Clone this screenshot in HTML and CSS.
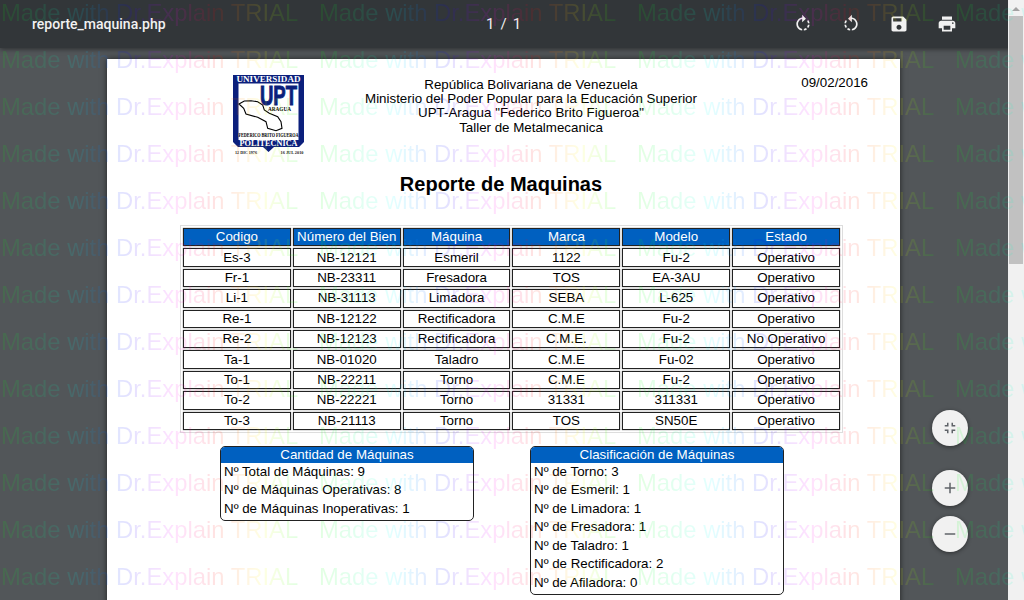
FILE: index.html
```html
<!DOCTYPE html>
<html lang="en">
  <head>
    <meta charset="UTF-8" />
    <title>reporte_maquina.php</title>
    <link rel="stylesheet" href="styles.css">
  </head>
  <body>
    <div class="viewer">
      <header class="toolbar">
        <div class="file-name">reporte_maquina.php</div>
        <div class="page-count"><span>1</span><span>/</span><span>1</span></div>
        <div class="tools">
          <svg viewBox="0 0 24 24"><path d="M15.55 5.55L11 1v3.07C7.06 4.56 4 7.92 4 12s3.05 7.44 7 7.93v-2.02c-2.84-.48-5-2.94-5-5.91s2.16-5.43 5-5.91V10l4.55-4.45zM19.93 11c-.17-1.39-.72-2.73-1.62-3.89l-1.42 1.42c.54.75.88 1.6 1.02 2.47h2.02zM13 17.9v2.02c1.39-.17 2.74-.71 3.9-1.61l-1.44-1.44c-.75.54-1.59.89-2.46 1.03zm3.89-2.42l1.42 1.41c.9-1.16 1.45-2.5 1.62-3.89h-2.02c-.14.87-.48 1.72-1.02 2.48z"/></svg>
          <svg viewBox="0 0 24 24"><path d="M7.11 8.53L5.7 7.11C4.8 8.27 4.24 9.61 4.07 11h2.02c.14-.87.49-1.72 1.02-2.47zM6.09 13H4.07c.17 1.39.72 2.73 1.62 3.89l1.41-1.42c-.52-.75-.87-1.59-1.01-2.47zm1.01 5.32c1.16.9 2.51 1.44 3.9 1.61V17.9c-.87-.15-1.71-.49-2.46-1.03L7.1 18.32zM13 4.07V1L8.45 5.55 13 10V6.09c2.84.48 5 2.94 5 5.91s-2.16 5.43-5 5.91v2.02c3.95-.49 7-3.85 7-7.93s-3.05-7.44-7-7.93z"/></svg>
          <svg viewBox="0 0 24 24"><path d="M17 3H5c-1.11 0-2 .9-2 2v14c0 1.1.89 2 2 2h14c1.1 0 2-.9 2-2V7l-4-4zm-5 16c-1.66 0-3-1.34-3-3s1.34-3 3-3 3 1.34 3 3-1.34 3-3 3zm3-10H5V5h10v4z"/></svg>
          <svg viewBox="0 0 24 24"><path d="M19 8H5c-1.66 0-3 1.34-3 3v6h4v4h12v-4h4v-6c0-1.66-1.34-3-3-3zm-3 11H8v-5h8v5zm3-7c-.55 0-1-.45-1-1s.45-1 1-1 1 .45 1 1-.45 1-1 1zm-1-9H6v4h12V3z"/></svg>
        </div>
      </header>

      <div class="content">
        <main class="stage">
          <div class="page">
            <div class="doc-head">
              <svg class="logo" viewBox="0 0 71 80">
                <path class="navy" d="M0 0H71V67L66 72H41L35.5 77 30 72H5L0 67Z"/>
                <path class="paper" d="M5.5 8.5H65.5V65H5.5Z"/>
                <text class="logo-top" x="35.5" y="6.8" textLength="64" lengthAdjust="spacingAndGlyphs">UNIVERSIDAD</text>
                <text class="logo-upt" x="45.5" y="30" textLength="37" lengthAdjust="spacingAndGlyphs">UPT</text>
                <text class="logo-small" x="46.5" y="36" textLength="23" lengthAdjust="spacingAndGlyphs">ARAGUA</text>
                <path class="map" d="M6 29 11.3 26 18 25.7 24.7 26.7 29.7 30 31.3 35 36.3 38.3 44.7 41.7 48 46.7 49 53.3 43 55.7 34.7 53.3 33 46.7 24.7 42.3 13 39 10.7 33.3Z"/>
                <text class="logo-small" x="35.5" y="62" textLength="60" lengthAdjust="spacingAndGlyphs">FEDERICO BRITO FIGUEROA</text>
                <text class="logo-top" x="35.5" y="71" textLength="58" lengthAdjust="spacingAndGlyphs">POLITECNICA</text>
                <text class="logo-date" x="13" y="78.5" textLength="22" lengthAdjust="spacingAndGlyphs">12 DIC 1976</text>
                <text class="logo-date" x="59" y="78.5" textLength="23" lengthAdjust="spacingAndGlyphs">16 JUL 2010</text>
              </svg>
              <div class="doc-title">
                <div>República Bolivariana de Venezuela</div>
                <div>Ministerio del Poder Popular para la Educación Superior</div>
                <div>UPT-Aragua "Federico Brito Figueroa"</div>
                <div>Taller de Metalmecanica</div>
              </div>
              <div class="doc-date">09/02/2016</div>
            </div>

            <h1>Reporte de Maquinas</h1>

            <table class="report">
              <thead>
                <tr>
                  <th>Codigo</th>
                  <th>Número del Bien</th>
                  <th>Máquina</th>
                  <th>Marca</th>
                  <th>Modelo</th>
                  <th>Estado</th>
                </tr>
              </thead>
              <tbody>
                <tr><td>Es-3</td><td>NB-12121</td><td>Esmeril</td><td>1122</td><td>Fu-2</td><td>Operativo</td></tr>
                <tr><td>Fr-1</td><td>NB-23311</td><td>Fresadora</td><td>TOS</td><td>EA-3AU</td><td>Operativo</td></tr>
                <tr><td>Li-1</td><td>NB-31113</td><td>Limadora</td><td>SEBA</td><td>L-625</td><td>Operativo</td></tr>
                <tr><td>Re-1</td><td>NB-12122</td><td>Rectificadora</td><td>C.M.E</td><td>Fu-2</td><td>Operativo</td></tr>
                <tr><td>Re-2</td><td>NB-12123</td><td>Rectificadora</td><td>C.M.E.</td><td>Fu-2</td><td>No Operativo</td></tr>
                <tr><td>Ta-1</td><td>NB-01020</td><td>Taladro</td><td>C.M.E</td><td>Fu-02</td><td>Operativo</td></tr>
                <tr><td>To-1</td><td>NB-22211</td><td>Torno</td><td>C.M.E</td><td>Fu-2</td><td>Operativo</td></tr>
                <tr><td>To-2</td><td>NB-22221</td><td>Torno</td><td>31331</td><td>311331</td><td>Operativo</td></tr>
                <tr><td>To-3</td><td>NB-21113</td><td>Torno</td><td>TOS</td><td>SN50E</td><td>Operativo</td></tr>
              </tbody>
            </table>

            <div class="summary">
              <section class="box">
                <h2>Cantidad de Máquinas</h2>
                <p>Nº Total de Máquinas: 9</p>
                <p>Nº de Máquinas Operativas: 8</p>
                <p>Nº de Máquinas Inoperativas: 1</p>
              </section>
              <section class="box">
                <h2>Clasificación de Máquinas</h2>
                <p>Nº de Torno: 3</p>
                <p>Nº de Esmeril: 1</p>
                <p>Nº de Limadora: 1</p>
                <p>Nº de Fresadora: 1</p>
                <p>Nº de Taladro: 1</p>
                <p>Nº de Rectificadora: 2</p>
                <p>Nº de Afiladora: 0</p>
              </section>
            </div>
          </div>
        </main>
        <div class="scrollbar">
          <div class="arrow"></div>
          <div class="thumb"></div>
        </div>
      </div>

      <div class="fab fab-fit"><svg viewBox="0 0 24 24"><path d="M5 16h3v3h2v-5H5v2zm3-8H5v2h5V5H8v3zm6 11h2v-3h3v-2h-5v5zm2-11V5h-2v5h5V8h-3z"/></svg></div>
      <div class="fab fab-plus"><svg viewBox="0 0 24 24"><path d="M19 13h-6v6h-2v-6H5v-2h6V5h2v6h6v2z"/></svg></div>
      <div class="fab fab-minus"><svg viewBox="0 0 24 24"><path d="M19 13H5v-2h14v2z"/></svg></div>

      <div class="watermark" id="watermark"></div>
    </div>

    <script>
      const watermark = document.getElementById('watermark');
      for (let i = 0; i < 52; i++) {
        const mark = document.createElement('span');
        mark.textContent = 'Made with Dr.Explain TRIAL';
        watermark.appendChild(mark);
      }
    </script>
  </body>
</html>
```

FILE: styles.css
```css
* {
  margin: 0;
  padding: 0;
  box-sizing: border-box;
}
html,
body {
  height: 100%;
  overflow: hidden;
}
body {
  font-family: "Liberation Sans", Arial, sans-serif;
  font-size: 13.33px;
  color: #000;
}
.viewer {
  position: relative;
  display: flex;
  flex-direction: column;
  width: 1024px;
  height: 600px;
  overflow: hidden;
  background: #f1f1f1;
}

/* top bar */
.toolbar {
  position: relative;
  z-index: 2;
  display: grid;
  grid-template-columns: 454px 100px 1fr;
  align-items: center;
  flex: none;
  height: 48px;
  padding-left: 32px;
  background: #323639;
  color: #f1f1f1;
  box-shadow: 0 1px 5px rgba(0, 0, 0, 0.5);
}
.file-name {
  font-family: Roboto, sans-serif;
  font-size: 14px;
  font-weight: 500;
}
.page-count {
  display: flex;
  gap: 6px;
  font-family: Roboto, sans-serif;
  font-size: 15px;
}
.tools {
  display: flex;
  gap: 28px;
  justify-content: flex-end;
  padding-right: 67px;
}
.tools svg {
  width: 20px;
  height: 20px;
  fill: #f1f1f1;
}

/* scrolling area */
.content {
  display: flex;
  flex: 1;
  min-height: 0;
}
.stage {
  flex: 1;
  min-width: 0;
  padding: 11px 0 0 107px;
  background: #525659;
  overflow: hidden;
}
.scrollbar {
  flex: none;
  display: flex;
  flex-direction: column;
  align-items: stretch;
  width: 16px;
  margin-top: -48px;
  position: relative;
  z-index: 3;
  background: #f1f1f1;
}
.arrow {
  width: 0;
  height: 0;
  margin: 7px auto 5px;
  border: 4px solid transparent;
  border-top: 0;
  border-bottom: 4px solid #a3a3a3;
}
.thumb {
  height: 248px;
  margin: 0 1px;
  background: #c1c1c1;
}

/* pdf sheet */
.page {
  width: 793px;
  height: 560px;
  padding: 16px 32px 0 126px;
  background: #fff;
  box-shadow: 0 0 6px rgba(0, 0, 0, 0.6);
}
.doc-head {
  display: flex;
  align-items: flex-start;
  height: 80px;
}
.logo {
  flex: none;
  width: 71px;
  height: 80px;
}
.navy {
  fill: #0b1f7c;
}
.paper {
  fill: #fff;
}
.map {
  fill: #fff;
  stroke: #000;
  stroke-width: 1.1;
}
.logo text {
  font-family: "Liberation Serif", serif;
  font-weight: 700;
  text-anchor: middle;
}
.logo .logo-top {
  font-size: 8px;
  fill: #fff;
}
.logo .logo-upt {
  font-family: "Liberation Sans", sans-serif;
  font-size: 27px;
  fill: #0b1f7c;
  stroke: #0b1f7c;
  stroke-width: 1;
}
.logo .logo-small {
  font-size: 5.5px;
  fill: #000;
}
.logo .logo-date {
  font-size: 4.5px;
  fill: #222;
}
.doc-title {
  flex: none;
  width: 454px;
  padding-top: 3px;
  line-height: 14.2px;
  text-align: center;
}
.doc-date {
  margin-left: auto;
}
h1 {
  width: 793px;
  margin: 17px 0 0 -126px;
  padding-right: 5px;
  font-size: 20px;
  line-height: 24px;
  text-align: center;
}

/* machine table */
.report {
  width: 661px;
  margin: 30px 0 0 -52px;
  table-layout: fixed;
  border-collapse: separate;
  border-spacing: 2px;
  outline: 1px solid #ddd;
}
.report th,
.report td {
  height: 18.4px;
  padding: 0;
  font-weight: 400;
  line-height: 16px;
  text-align: center;
  border: 1px solid #222;
  box-shadow: 0 0 1px #555;
}
.report th {
  background: #0060c0;
  color: #fff;
}

/* totals */
.summary {
  display: flex;
  gap: 56px;
  align-items: flex-start;
  margin: 14px 0 0 -13px;
}
.box {
  flex: none;
  width: 254px;
  border: 1px solid #222;
  border-radius: 5px;
  overflow: hidden;
  padding-bottom: 2px;
}
.box h2 {
  font-size: 13.33px;
  font-weight: 400;
  line-height: 16px;
  text-align: center;
  color: #fff;
  background: #0060c0;
}
.box p {
  padding-left: 3px;
  line-height: 18.5px;
}

/* round zoom buttons */
.fab {
  position: absolute;
  left: 932px;
  display: flex;
  align-items: center;
  justify-content: center;
  width: 36px;
  height: 36px;
  border-radius: 50%;
  background: #f1f1f1;
  box-shadow: 0 1px 4px rgba(0, 0, 0, 0.45);
}
.fab svg {
  width: 18px;
  height: 18px;
  fill: #5f6368;
}
.fab-fit {
  top: 410px;
}
.fab-plus {
  top: 470px;
}
.fab-minus {
  top: 516px;
}

/* trial overlay */
.watermark {
  position: absolute;
  top: -5.5px;
  left: 1px;
  z-index: 5;
  display: grid;
  grid-template-columns: repeat(4, 318px);
  grid-auto-rows: 47.05px;
  pointer-events: none;
}
.watermark span {
  justify-self: start;
  font-size: 23.8px;
  line-height: 36px;
  white-space: nowrap;
  color: transparent;
  background: linear-gradient(90deg, #0f0, #0ff 25%, #00f 42%, #f0f 58%, #f00 72%, #ff0 88%, #0f0);
  -webkit-background-clip: text;
  background-clip: text;
  opacity: 0.11;
}
```
